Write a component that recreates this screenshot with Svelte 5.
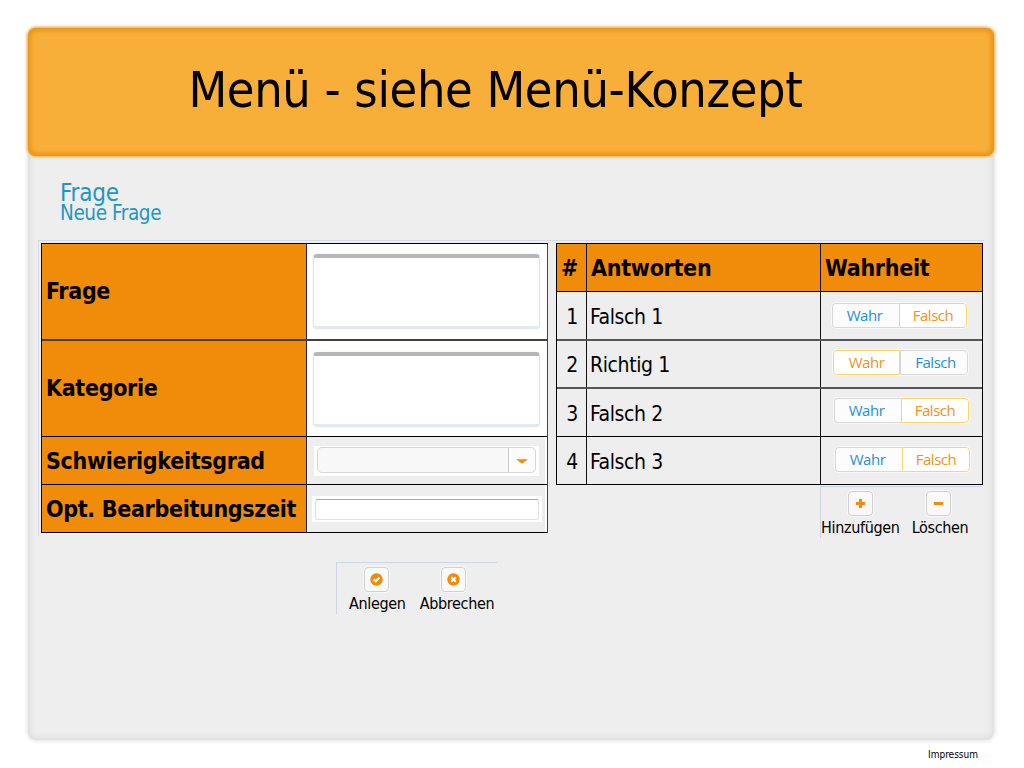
<script>
  const answers = [
    { text: 'Falsch 1', truth: false },
    { text: 'Richtig 1', truth: true },
    { text: 'Falsch 2', truth: false },
    { text: 'Falsch 3', truth: false }
  ];
</script>

{#snippet action(kind, label)}
  <div class="action">
    <button class="icon-button" aria-label={label}>
      <svg width="13" height="13" viewBox="0 0 13 13">
        {#if kind === 'check'}
          <circle cx="6.5" cy="6.5" r="6.2" fill="#f08c0a" />
          <path d="M3.6 6.4L5.8 8.4L9.5 4.5" fill="none" stroke="#fff" stroke-width="2.1" />
        {:else if kind === 'cross'}
          <circle cx="6.5" cy="6.5" r="6.2" fill="#f08c0a" />
          <path d="M4.2 4.2L8.8 8.8M8.8 4.2L4.2 8.8" fill="none" stroke="#fff" stroke-width="2" />
        {:else if kind === 'plus'}
          <path d="M6.5 2V11M2 6.5H11" fill="none" stroke="#f08c0a" stroke-width="3" />
        {:else}
          <path d="M1.8 6.5H11.2" fill="none" stroke="#f08c0a" stroke-width="3" />
        {/if}
      </svg>
    </button>
    <span>{label}</span>
  </div>
{/snippet}

<div class="page">
  <div class="sheet">
    <header><h1>Menü - siehe Menü-Konzept</h1></header>
    <div class="headings">
      <h2>Frage</h2>
      <h3>Neue Frage</h3>
    </div>
    <main>
      <div class="form">
        <div class="row tall first">
          <div class="label">Frage</div>
          <div class="field white"><textarea aria-label="Frage"></textarea></div>
        </div>
        <div class="row tall">
          <div class="label">Kategorie</div>
          <div class="field white"><textarea aria-label="Kategorie"></textarea></div>
        </div>
        <div class="row">
          <div class="label">Schwierigkeitsgrad</div>
          <div class="field">
            <div class="select-back">
              <div class="select">
                <div class="value"></div>
                <div class="arrow"><svg width="12" height="5" viewBox="0 0 12 5"><path d="M0 .3H12L6 4.7Z" fill="#f08c0a" /></svg></div>
              </div>
            </div>
          </div>
        </div>
        <div class="row">
          <div class="label">Opt. Bearbeitungszeit</div>
          <div class="field"><div class="input-back"><input aria-label="Opt. Bearbeitungszeit" /></div></div>
        </div>
      </div>
      <div class="side">
        <div class="answers">
          <div class="arow head"><div>#</div><div>Antworten</div><div>Wahrheit</div></div>
          {#each answers as a, i}
            <div class="arow r{i + 1}">
              <div class="num">{i + 1}</div>
              <div class="ans">{a.text}</div>
              <div class="truth">
                <div class="toggle">
                  <span class="left" class:on={a.truth}>Wahr</span>
                  <span class="right" class:on={!a.truth}>Falsch</span>
                </div>
              </div>
            </div>
          {/each}
        </div>
        <div class="actions edit">
          {@render action('plus', 'Hinzufügen')}
          {@render action('minus', 'Löschen')}
        </div>
      </div>
    </main>
    <div class="actions submit">
      {@render action('check', 'Anlegen')}
      {@render action('cross', 'Abbrechen')}
    </div>
  </div>
  <footer>Impressum</footer>
</div>

<style>
  :global(body) { background: #fff; overflow: hidden; }
  * { box-sizing: border-box; }
  .page {
    width: 1024px; height: 768px; padding: 28px 30px 0 28px;
    font-family: "DejaVu Sans Condensed", "DejaVu Sans", sans-serif;
    font-stretch: condensed; color: #000; white-space: nowrap;
  }
  .sheet {
    height: 712px; border-radius: 8px; background: #eee;
    box-shadow: inset 0 0 6px 2px #dcdcdc, 0 0 4px 1px #e2e2e2;
  }
  header {
    height: 128px; border-radius: 8px; background: #f8af3a;
    box-shadow: inset 0 0 4px 3px #e99513, 0 0 3px 1px #f3ab40;
    display: flex; align-items: center; justify-content: center;
    padding: 0 31px 5px 0;
  }
  h1, h2, h3 { margin: 0; font-weight: 400; }
  h1 { font-size: 50px; letter-spacing: -0.34px; }
  .headings { padding: 27px 0 0 32px; color: #1e96c8; }
  h2 { font-size: 24px; line-height: 20px; letter-spacing: -0.2px; }
  h3 { font-size: 20.5px; line-height: 20px; letter-spacing: -0.4px; }
  main {
    display: flex; margin: 17px 0 0 10px; width: 946px; height: 296px;
    border-top: 1px solid #d3dcea; border-left: 1px solid #d3dcea;
    padding: 2px 0 0 2px;
  }
  .form {
    width: 507px; height: 290px; border: 1px solid #000; border-bottom: 0;
    border-right-color: #444; flex: none;
  }
  .row { display: flex; height: 48px; border-bottom: 1px solid #000; }
  .row.tall { height: 96px; }
  .row.first { height: 97px; border-bottom: 2px solid #443f3a; }
  .label {
    width: 265px; background: #f08c0a; border-right: 1px solid #222;
    display: flex; align-items: center; padding: 1px 0 0 4px;
    font-size: 23px; font-weight: 700; letter-spacing: -0.32px;
  }
  .tall .label { padding: 0 0 1px 4px; }
  .field { flex: 1; box-shadow: inset 1px 0 #fff, inset -2px 0 #fff; }
  .white { background: #fff; padding: 10px 6px 0; }
  .row:nth-child(2) .white { padding-top: 11px; }
  textarea {
    display: block; width: 227px; height: 75px; resize: none; background: #fff;
    border: 1px solid #e2e6ec; border-top: 4px solid #b4b6b9; border-bottom: 3px solid #e3e9f0;
    border-radius: 4px; box-shadow: 0 0 2px #e6e9ef;
  }
  .select-back { margin: 9px 0 0 7px; width: 225px; height: 30px; padding: 1px 3px; background: #fff; }
  .select {
    display: flex; height: 26px; width: 219px; border: 1px solid #d6d6d6;
    border-radius: 5px; background: #f8f8f8;
  }
  .value { width: 190px; }
  .arrow { flex: 1; display: flex; align-items: center; justify-content: center; border-left: 1px solid #c8c8c8; padding-top: 3px; background: #fcfcfc; border-radius: 0 5px 5px 0; }
  .input-back { margin: 11px 0 0 5px; width: 230px; height: 26px; padding: 3px; background: #fff; }
  input {
    display: block; width: 224px; height: 21px; border: 1px solid #dde1ea;
    border-top-color: #a5a7ac; border-radius: 3px; background: #fff; padding: 0;
  }
  .side { margin-left: 8px; width: 427px; flex: none; }
  .answers { border: 1px solid #000; border-bottom: 0; width: 427px; }
  .arow { display: grid; grid-template-columns: 30px 234px 161px; height: 48px; border-bottom: 1px solid #000; }
  .arow > div:not(:last-child) { border-right: 1px solid #111; }
  .head { background: #f08c0a; font-size: 23px; font-weight: 700; letter-spacing: -0.28px; }
  .head > div { display: flex; align-items: center; padding: 1px 0 0 4px; }
  .r1 { height: 49px; border-bottom: 2px solid #555; }
  .r2 { border-bottom: 2px solid #555; }
  .num, .ans { display: flex; align-items: center; font-size: 21px; letter-spacing: -0.4px; padding-top: 2px; }
  .num { justify-content: center; padding-left: 1px; }
  .ans { padding-left: 3px; }
  .truth { padding: 11px 0 0 11px; }
  .r2 .truth { padding: 9px 0 0 12px; }
  .r3 .truth { padding: 9px 0 0 13px; }
  .r4 .truth { padding: 10px 0 0 14px; }
  .toggle {
    display: flex; width: 135px; height: 25px; border-radius: 4px; background: #fff;
    box-shadow: 0 0 0 1px #f8f8f8;
    font-family: "Open Sans", sans-serif; font-stretch: normal; font-size: 15px; letter-spacing: -0.45px; color: #1f93d0;
  }
  .toggle span {
    width: 67px; border: 1px solid #d8d8d8; background: #fcfcfc;
    display: flex; align-items: center; justify-content: center; padding: 0 3px 2px 0;
  }
  .toggle .left { border-radius: 4px 0 0 4px; border-right: 0; }
  .toggle .right { width: 68px; border-radius: 0 4px 4px 0; padding-right: 0; }
  .toggle .on { color: #ee941a; border-color: #fbd566; background: #fff; }
  .toggle .right:not(.on) { padding-left: 3px; }
  .toggle .left.on { border-right: 1px solid #fbd566; padding-right: 0; }
  .actions { display: flex; height: 52px; border-top: 1px solid #ccd6e6; border-left: 1px solid #ccd6e6; }
  .action { display: flex; flex-direction: column; align-items: center; font-size: 16px; line-height: 20px; letter-spacing: -0.33px; }
  .icon-button {
    width: 25px; height: 25px; padding: 0; border: 1px solid #d0d0d0; border-radius: 4px;
    background: #f9f9f9; display: flex; align-items: center; justify-content: center;
    box-shadow: 0 0 0 1px #f8f8f8;
  }
  .edit { margin: 1px 0 0 264px; width: 162px; padding-top: 4px; gap: 12px; }
  .edit .action span { margin-top: 2px; }
  .edit .action:last-child .icon-button { margin-right: 3px; }
  .submit { margin: 26px 0 0 308px; width: 161px; padding: 4px 0 0 12px; gap: 14px; }
  .submit .action span { margin-top: 2px; }
  .submit .action .icon-button { margin-right: 1px; }
  .submit .action:last-child .icon-button { margin-right: 6px; }
  footer { text-align: right; padding: 8px 16px 0 0; font-size: 10px; line-height: 14px; }
</style>
